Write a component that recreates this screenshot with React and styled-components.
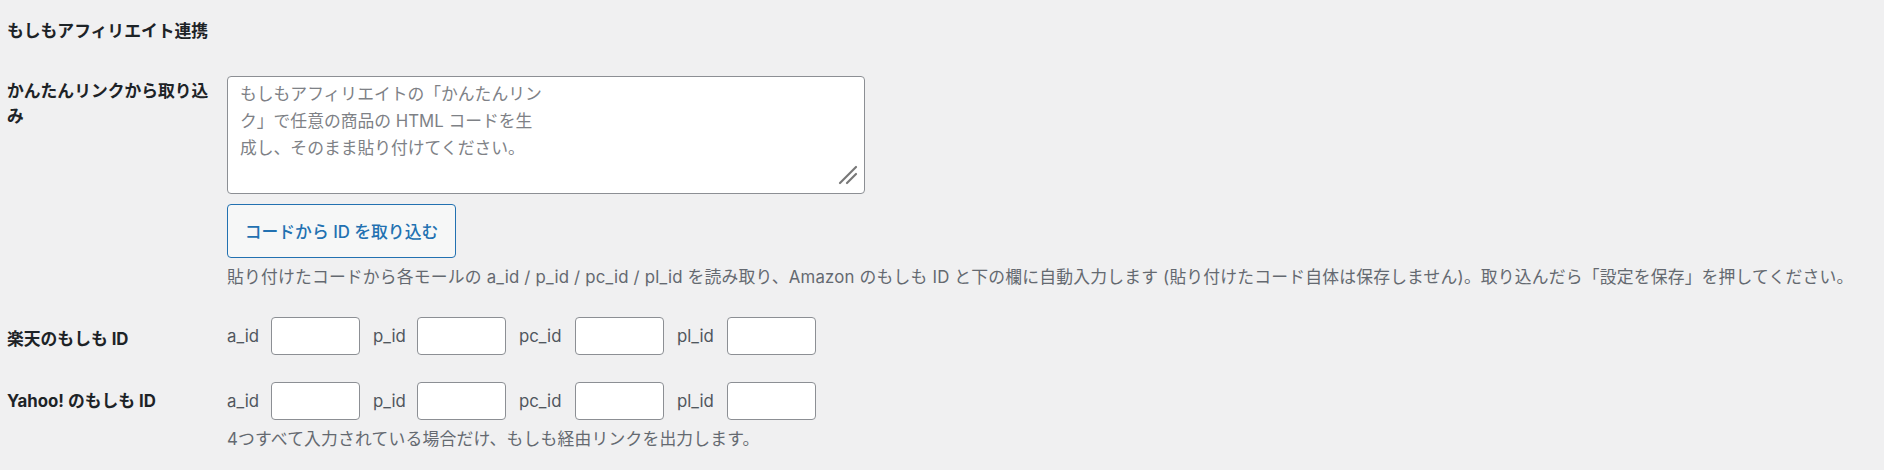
import React from "react";
import styled, { createGlobalStyle } from "styled-components";

const FONT = `"Inter", "Noto Sans CJK JP", sans-serif`;

const Global = createGlobalStyle`
  html, body { margin: 0; padding: 0; background: #f0f0f1; }
  body {
    font-family: ${FONT};
    font-size: 16.8px;
    color: #1d2327;
  }
`;

const Page = styled.div`
  padding: 19px 0 0 7px;
  width: 1877px;
  height: 451px;
  box-sizing: border-box;
`;

const Heading = styled.h2`
  margin: 0;
  font-size: 16.8px;
  line-height: 24px;
  font-weight: 700;
  color: #1d2327;
`;

const Rows = styled.div`
  margin-top: 33px;
  display: flex;
  flex-direction: column;
`;

const Row = styled.div`
  display: grid;
  grid-template-columns: 220px 1fr;
  align-items: start;
  margin-top: ${(p) => p.$gap || 0}px;
`;

const Label = styled.div`
  width: 210px;
  font-weight: 700;
  font-size: 16.8px;
  line-height: 25px;
  color: #1d2327;
  padding-top: ${(p) => p.$pad || 0}px;
`;

const Field = styled.div`
  display: flex;
  flex-direction: column;
  align-items: flex-start;
`;

const AreaWrap = styled.div`
  position: relative;
  width: 638px;
  height: 118px;
`;

const TextArea = styled.textarea`
  display: block;
  box-sizing: border-box;
  width: 100%;
  height: 100%;
  margin: 0;
  padding: 4px 12px;
  border: 1px solid #8c8f94;
  border-radius: 4px;
  background: #fff;
  font-family: ${FONT};
  font-size: 16.8px;
  line-height: 27px;
  color: #2c3338;
  resize: none;
  &::placeholder {
    color: #7e8186;
    opacity: 1;
    line-height: 27px;
  }
`;

const Grip = styled.svg`
  position: absolute;
  right: 7px;
  bottom: 9px;
  width: 20px;
  height: 20px;
  pointer-events: none;
`;

const Button = styled.button`
  margin-top: 10px;
  box-sizing: border-box;
  height: 54px;
  width: 229px;
  padding: 0 10px;
  border: 1px solid #2271b1;
  border-radius: 4px;
  background: #f6f7f7;
  color: #2271b1;
  font-family: ${FONT};
  font-size: 16.8px;
  font-weight: 500;
  cursor: pointer;
`;

const Description = styled.p`
  margin: ${(p) => p.$top || 7}px 0 0;
  font-size: 16.8px;
  line-height: 24px;
  letter-spacing: 0.2px;
  color: #646970;
  white-space: nowrap;
`;

const IdGroup = styled.div`
  display: flex;
  align-items: center;
  gap: 13px;
`;

const IdPair = styled.label`
  display: flex;
  align-items: center;
  gap: 9px;
  font-size: 16.8px;
  color: #50575e;
`;

const IdText = styled.span`
  display: inline-block;
  width: ${(p) => p.$w}px;
`;

const IdInput = styled.input`
  box-sizing: border-box;
  width: 89px;
  height: 38px;
  margin: 0;
  padding: 0 8px;
  border: 1px solid #8c8f94;
  border-radius: 4px;
  background: #fff;
  font-size: 16.8px;
`;

const RowLabel = styled(Label)`
  align-self: ${(p) => (p.$selfTop ? "start" : "center")};
`;

const ids = [
  { id: "a_id", w: 35 },
  { id: "p_id", w: 35 },
  { id: "pc_id", w: 47 },
  { id: "pl_id", w: 41 },
];

function IdFields({ prefix }) {
  return (
    <IdGroup>
      {ids.map(({ id, w }) => (
        <IdPair key={id}>
          <IdText $w={w}>{id}</IdText>
          <IdInput type="text" name={`${prefix}_${id}`} />
        </IdPair>
      ))}
    </IdGroup>
  );
}

export default function App() {
  return (
    <>
      <Global />
      <Page>
        <Heading>もしもアフィリエイト連携</Heading>
        <Rows>
          <Row>
            <Label $pad={3}>かんたんリンクから取り込み</Label>
            <Field>
              <AreaWrap>
                <TextArea
                  placeholder={
                    "もしもアフィリエイトの「かんたんリン\nク」で任意の商品の HTML コードを生\n成し、そのまま貼り付けてください。"
                  }
                />
                <Grip viewBox="0 0 20 20">
                  <line x1="2" y1="18" x2="18" y2="2" stroke="#777" strokeWidth="2.2" strokeLinecap="round" />
                  <line x1="9" y1="18" x2="18" y2="9" stroke="#777" strokeWidth="2.2" strokeLinecap="round" />
                </Grip>
              </AreaWrap>
              <Button type="button">コードから ID を取り込む</Button>
              <Description>
                貼り付けたコードから各モールの a_id / p_id / pc_id / pl_id を読み取り、Amazon のもしも ID と下の欄に自動入力します (貼り付けたコード自体は保存しません)。取り込んだら「設定を保存」を押してください。
              </Description>
            </Field>
          </Row>
          <Row $gap={28}>
            <RowLabel $pad={7}>楽天のもしも ID</RowLabel>
            <Field>
              <IdFields prefix="rakuten" />
            </Field>
          </Row>
          <Row $gap={27}>
            <RowLabel $selfTop $pad={7}>Yahoo! のもしも ID</RowLabel>
            <Field>
              <IdFields prefix="yahoo" />
              <Description $top={7}>4つすべて入力されている場合だけ、もしも経由リンクを出力します。</Description>
            </Field>
          </Row>
        </Rows>
      </Page>
    </>
  );
}
